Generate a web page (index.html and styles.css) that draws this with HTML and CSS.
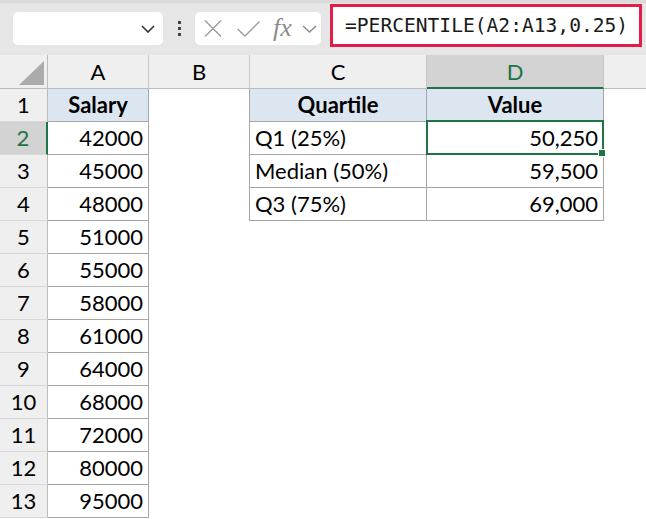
FILE: index.html
```html
<!DOCTYPE html>
<html lang="en">
<head>
    <meta charset="UTF-8">
    <title>Percentile</title>
    <link rel="stylesheet" href="styles.css">
</head>
<body>
    <div class="toolbar">
        <div class="namebox">
            <svg width="14" height="8" viewBox="0 0 14 8"><path d="M1 1 L7 7 L13 1" fill="none" stroke="#333" stroke-width="1.6"/></svg>
        </div>
        <div class="grip"><span></span><span></span><span></span></div>
        <div class="fxbox">
            <svg class="ico-x" width="18" height="17" viewBox="0 0 18 17"><path d="M1 0.5 L17 16.5 M17 0.5 L1 16.5" stroke="#9c9c9c" stroke-width="1.4"/></svg>
            <svg class="ico-ok" width="23" height="16" viewBox="0 0 23 16"><path d="M0.5 8 L8 15 L22.5 0.5" fill="none" stroke="#9c9c9c" stroke-width="1.4"/></svg>
            <span class="fx">fx</span>
            <svg class="ico-dd" width="15" height="8" viewBox="0 0 15 8"><path d="M1 1 L7.5 7 L14 1" fill="none" stroke="#8a8a8a" stroke-width="1.4"/></svg>
        </div>
        <div class="formula">=PERCENTILE(A2:A13,0.25)</div>
    </div>

    <div class="sheet">
        <div class="corner"><span class="tri"></span></div>
        <div class="hd">A</div>
        <div class="hd">B</div>
        <div class="hd">C</div>
        <div class="hd hd-sel">D</div>
        <div class="hd hd-rest"></div>

        <div class="rh">1</div>
        <div class="b th">Salary</div>
        <div class="edge"></div>
        <div class="b th">Quartile</div>
        <div class="b th">Value</div>
        <div></div>

        <div class="rh rh-sel">2</div>
        <div class="b num">42000</div>
        <div class="edge"></div>
        <div class="b txt">Q1 (25%)</div>
        <div class="b num active">50,250<span class="handle"></span></div>
        <div></div>

        <div class="rh">3</div>
        <div class="b num">45000</div>
        <div class="edge"></div>
        <div class="b txt">Median (50%)</div>
        <div class="b num">59,500</div>
        <div></div>

        <div class="rh">4</div>
        <div class="b num">48000</div>
        <div class="edge"></div>
        <div class="b txt">Q3 (75%)</div>
        <div class="b num">69,000</div>
        <div></div>

        <div class="rh">5</div><div class="b num">51000</div><div></div><div></div><div></div><div></div>
        <div class="rh">6</div><div class="b num">55000</div><div></div><div></div><div></div><div></div>
        <div class="rh">7</div><div class="b num">58000</div><div></div><div></div><div></div><div></div>
        <div class="rh">8</div><div class="b num">61000</div><div></div><div></div><div></div><div></div>
        <div class="rh">9</div><div class="b num">64000</div><div></div><div></div><div></div><div></div>
        <div class="rh">10</div><div class="b num">68000</div><div></div><div></div><div></div><div></div>
        <div class="rh">11</div><div class="b num">72000</div><div></div><div></div><div></div><div></div>
        <div class="rh">12</div><div class="b num">80000</div><div></div><div></div><div></div><div></div>
        <div class="rh">13</div><div class="b num">95000</div><div></div><div></div><div></div><div></div>
    </div>
</body>
</html>
```

FILE: styles.css
```css
body {
    margin: 0;
    background-color: #fff;
    font-family: Lato, "Liberation Sans", sans-serif;
    color: #000;
    height: 519px;
    overflow: hidden;
}

/* formula bar */
.toolbar {
    box-sizing: border-box;
    height: 55px;
    background-color: #e6e6e6;
    border-top: 3px solid #dadada;
    display: flex;
    align-items: flex-start;
}
.namebox {
    box-sizing: border-box;
    width: 150px;
    height: 33px;
    margin: 9px 0 0 13px;
    background-color: #fff;
    border-radius: 5px;
    display: flex;
    align-items: center;
    justify-content: flex-end;
    padding-right: 8px;
}
.grip {
    width: 32px;
    margin-top: 18px;
    display: flex;
    flex-direction: column;
    align-items: center;
    gap: 3px;
}
.grip span {
    width: 3px;
    height: 3px;
    background-color: #444;
}
.fxbox {
    box-sizing: border-box;
    width: 126px;
    height: 33px;
    margin-top: 9px;
    background-color: #fff;
    border-radius: 5px;
    display: flex;
    align-items: center;
    padding-left: 9px;
}
.ico-ok {
    margin-left: 15px;
}
.fx {
    margin-left: 13px;
    width: 24px;
    font-family: "Liberation Serif", serif;
    font-style: italic;
    font-size: 26px;
    color: #8c8c8c;
    line-height: 1;
    padding-bottom: 2px;
}
.ico-dd {
    margin-left: 5px;
}
.formula {
    box-sizing: border-box;
    width: 312px;
    height: 43px;
    margin: 1px 0 0 9px;
    background-color: #fff;
    border: 3px solid #e11d48;
    padding-left: 12px;
    font-family: "DejaVu Sans Mono", "Liberation Mono", monospace;
    font-size: 19.6px;
    line-height: 38px;
    color: #1a1a1a;
    white-space: nowrap;
}

/* grid */
.sheet {
    display: grid;
    grid-template-columns: 48px 101px 101px 177px 177px 1fr;
    grid-template-rows: 34px;
    grid-auto-rows: 33px;
    font-size: 22px;
    line-height: 32px;
}
.sheet > div {
    box-sizing: border-box;
    white-space: nowrap;
}
.corner {
    background-color: #efefef;
    border-right: 1px solid #bcbcbc;
    border-bottom: 1px solid #bcbcbc;
    position: relative;
}
.tri {
    position: absolute;
    right: 3px;
    bottom: 3px;
    width: 0;
    height: 0;
    border-left: 25px solid transparent;
    border-bottom: 24px solid #ababab;
}
.hd {
    background-color: #efefef;
    border-right: 1px solid #c6c6c6;
    border-bottom: 1px solid #bcbcbc;
    text-align: center;
    line-height: 33px;
}
.hd-sel {
    background-color: #d3d3d3;
    color: #217346;
    border-bottom: 2px solid #217346;
}
.hd-rest {
    border-right: none;
}
.rh {
    background-color: #efefef;
    border-right: 1px solid #bcbcbc;
    border-bottom: 1px solid #d8d8d8;
    text-align: center;
}
.rh-sel {
    background-color: #d3d3d3;
    color: #217346;
    border-right: 2px solid #217346;
}
.b {
    border-right: 1px solid #a6a6a6;
    border-bottom: 1px solid #a6a6a6;
}
.edge {
    border-right: 1px solid #a6a6a6;
}
.th {
    background-color: #dce6f1;
    font-weight: bold;
    text-align: center;
}
.num {
    text-align: right;
    padding-right: 5px;
}
.txt {
    padding-left: 5px;
}
.active {
    position: relative;
}
.active::before {
    content: "";
    position: absolute;
    top: -2px;
    left: -1px;
    right: -1px;
    bottom: -1px;
    border: 2px solid #217346;
}
.handle {
    position: absolute;
    right: -3px;
    bottom: -3px;
    width: 6px;
    height: 6px;
    background-color: #217346;
    border: 1px solid #fff;
}
```
